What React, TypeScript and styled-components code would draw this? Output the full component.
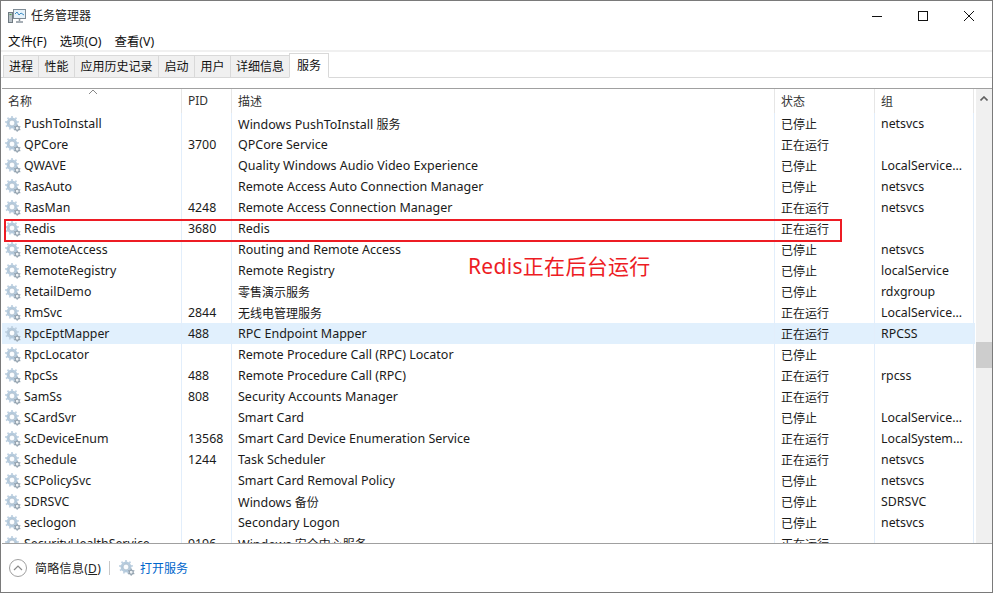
import React from "react";
import styled, { createGlobalStyle } from "styled-components";

const Global = createGlobalStyle`
  html, body { margin: 0; padding: 0; background: #fff; }
  body { font-family: "Noto Sans", "Noto Sans CJK SC", sans-serif; font-size: 12px; color: #1a1a1a; }
`;
const Win = styled.div`
  position: relative; box-sizing: border-box; width: 993px; height: 593px;
  border: 1px solid #7a7a7a; background: #fff; display: flex; flex-direction: column; overflow: hidden;
`;
const TitleBar = styled.div`display: flex; align-items: center; height: 29px; padding-left: 7px; flex: none;`;
const TitleText = styled.span`margin: -2px 0 0 5px; font-size: 12px; color: #222;`;
const WinButtons = styled.div`margin-left: auto; display: flex; align-items: center; height: 29px;`;
const WinBtn = styled.div`width: 46px; height: 29px; display: flex; align-items: center; justify-content: center;`;
const MenuBar = styled.div`display: flex; height: 20px; align-items: center; padding: 2px 0 0 7px; box-sizing: border-box; gap: 13px; flex: none;`;
const MenuItem = styled.span`font-size: 12.4px; color: #111;`;
const TabStrip = styled.div`
  display: flex; align-items: flex-end; height: 25px; flex: none; padding-left: 2px;
  border-top: 2px solid #f0f0f0; border-bottom: 1px solid #d9d9d9;
`;
const Tab = styled.div<{ $active?: boolean; $w: number }>`
  box-sizing: border-box; height: ${(p) => (p.$active ? 25 : 22)}px; width: ${(p) => p.$w}px;
  display: flex; align-items: center; justify-content: center; font-size: 12px; color: #111;
  padding-bottom: 2px;
  background: ${(p) => (p.$active ? "#fff" : "#f0f0f0")};
  border: 1px solid #d9d9d9; border-bottom: ${(p) => (p.$active ? "1px solid #fff" : "none")}; margin-right: -1px;
  margin-bottom: ${(p) => (p.$active ? -1 : 0)}px; position: relative;
`;
const Spacer = styled.div`height: 10px; flex: none;`;
const TableWrap = styled.div`
  flex: 1; min-height: 0; margin-left: 1px; border-top: 1px solid #a0a0a0; border-bottom: 1px solid #a0a0a0;
  display: flex; overflow: hidden;
`;
const Table = styled.div`flex: 1; min-width: 0; overflow: hidden;`;
const Grid = `display: grid; grid-template-columns: 180px 50px 543px 100px 99px;`;
const HeadRow = styled.div`${Grid} height: 24px; position: relative;`;
const HeadCell = styled.div`
  box-sizing: border-box; border-right: 1px solid #e6e6e6; padding-left: 6px; padding-top: 3px;
  font-size: 12px; color: #333;
`;
const SortArrow = styled.svg`position: absolute; left: 86px; top: 0; width: 10px; height: 6px;`;
const Row = styled.div<{ $sel?: boolean }>`
  ${Grid} height: 21px; background: ${(p) => (p.$sel ? "#e1f0fd" : "transparent")};
`;
const Cell = styled.div`
  box-sizing: border-box; border-right: 1px solid #e2eefb; padding-left: 6px;
  display: flex; align-items: center; white-space: pre;
  overflow: hidden; font-size: 12.35px; color: #1a1a1a;
`;
const NameCell = styled(Cell)`padding-left: 3px; gap: 3px;`;
const DescCell = styled(Cell)`font-size: 12.5px;`;
const Cjk = styled.span`font-size: 12px;`;
const ScrollBar = styled.div`width: 16px; flex: none; margin-left: 1px; background: #f0f0f0; position: relative;`;
const Thumb = styled.div`position: absolute; left: 0; right: 0; top: 253px; height: 26px; background: #cdcdcd;`;
const ScrollUp = styled.svg`position: absolute; left: 4px; top: 7px; width: 8px; height: 5px;`;
const Footer = styled.div`display: flex; align-items: center; height: 48px; flex: none; padding-left: 8px;`;
const Chevron = styled.div`
  width: 18px; height: 18px; border: 1px solid #a0a0a0; border-radius: 50%; box-sizing: border-box;
  display: flex; align-items: center; justify-content: center;
`;
const FooterLabel = styled.span`margin-left: 8px; font-size: 12px; letter-spacing: .3px; color: #222;`;
const Underlined = styled.span`text-decoration: underline;`;
const Divider = styled.div`width: 1px; height: 14px; background: #c8c8c8; margin: 0 9px 0 8px;`;
const LinkText = styled.span`margin-left: 5px; color: #0066cc; font-size: 12px;`;
const RedBox = styled.div`
  position: absolute; left: 3px; top: 218px; width: 838px; height: 23px; box-sizing: border-box;
  border: 2px solid #ed1c24; pointer-events: none;
`;
const Note = styled.div`position: absolute; left: 467px; top: 249px; font-size: 21px; letter-spacing: .3px; color: #ed1c24; white-space: nowrap;`;

const Gear = ({ size = 16 }: { size?: number }) => {
  const teeth = (cx: number, cy: number, r: number, n: number, w: number, c: string) =>
    Array.from({ length: n }, (_, i) => (
      <line key={i} x1={cx} y1={cy - r} x2={cx} y2={cy - r + 2.4} stroke={c} strokeWidth={w}
        transform={`rotate(${(360 / n) * i} ${cx} ${cy})`} />
    ));
  return (
    <svg width={size} height={size} viewBox="0 0 16 16" style={{ flex: "none" }}>
      {teeth(7, 7, 7, 9, 1.7, "#c0d2e2")}
      <circle cx="7" cy="7" r="4.2" fill="none" stroke="#b6cbdd" strokeWidth="2.4" />
      <circle cx="7" cy="7" r="2.9" fill="#fbfdff" stroke="#8fa6ba" strokeWidth=".6" />
      {teeth(12.2, 12.2, 3.6, 6, 1.2, "#98a7b4")}
      <circle cx="12.2" cy="12.2" r="2" fill="#eef2f5" stroke="#8f9eab" strokeWidth="1.1" />
    </svg>
  );
};

const Text = ({ v }: { v: string }) => (
  <span>
    {v.split(/([\u4e00-\u9fff]+)/).map((part, i) =>
      i % 2 ? <Cjk key={i}>{part}</Cjk> : part
    )}
  </span>
);

const rows: [string, string, string, string, string][] = [
  ["PushToInstall", "", "Windows PushToInstall 服务", "已停止", "netsvcs"],
  ["QPCore", "3700", "QPCore Service", "正在运行", ""],
  ["QWAVE", "", "Quality Windows Audio Video Experience", "已停止", "LocalService..."],
  ["RasAuto", "", "Remote Access Auto Connection Manager", "已停止", "netsvcs"],
  ["RasMan", "4248", "Remote Access Connection Manager", "正在运行", "netsvcs"],
  ["Redis", "3680", "Redis", "正在运行", ""],
  ["RemoteAccess", "", "Routing and Remote Access", "已停止", "netsvcs"],
  ["RemoteRegistry", "", "Remote Registry", "已停止", "localService"],
  ["RetailDemo", "", "零售演示服务", "已停止", "rdxgroup"],
  ["RmSvc", "2844", "无线电管理服务", "正在运行", "LocalService..."],
  ["RpcEptMapper", "488", "RPC Endpoint Mapper", "正在运行", "RPCSS"],
  ["RpcLocator", "", "Remote Procedure Call (RPC) Locator", "已停止", ""],
  ["RpcSs", "488", "Remote Procedure Call (RPC)", "正在运行", "rpcss"],
  ["SamSs", "808", "Security Accounts Manager", "正在运行", ""],
  ["SCardSvr", "", "Smart Card", "已停止", "LocalService..."],
  ["ScDeviceEnum", "13568", "Smart Card Device Enumeration Service", "正在运行", "LocalSystem..."],
  ["Schedule", "1244", "Task Scheduler", "正在运行", "netsvcs"],
  ["SCPolicySvc", "", "Smart Card Removal Policy", "已停止", "netsvcs"],
  ["SDRSVC", "", "Windows 备份", "已停止", "SDRSVC"],
  ["seclogon", "", "Secondary Logon", "已停止", "netsvcs"],
  ["SecurityHealthService", "9196", "Windows 安全中心服务", "正在运行", ""],
];

const tabs: [string, number][] = [["进程", 36], ["性能", 37], ["应用历史记录", 85], ["启动", 37], ["用户", 37], ["详细信息", 60]];

export default function App() {
  return (
    <Win>
      <Global />
      <TitleBar>
        <svg width="18" height="16" viewBox="0 0 18 16">
          <rect x="0.5" y="4.5" width="4" height="10" fill="#b9c2c8" stroke="#6f7a82" />
          <rect x="1.5" y="6" width="2" height="1" fill="#4fa14f" />
          <rect x="5.5" y="1.5" width="12" height="9" fill="#e6f2fa" stroke="#7f8c96" />
          <path d="M7 6 L9 4 L11 7 L13 5 L16 7" fill="none" stroke="#3f8fc8" strokeWidth="1" />
          <path d="M11.5 11 V13 M8 14 H15" stroke="#8a959e" strokeWidth="1.5" />
        </svg>
        <TitleText>任务管理器</TitleText>
        <WinButtons>
          <WinBtn>
            <svg width="10" height="10"><path d="M0 5.5 H10" stroke="#111" /></svg>
          </WinBtn>
          <WinBtn>
            <svg width="10" height="10"><rect x=".5" y=".5" width="9" height="9" fill="none" stroke="#111" /></svg>
          </WinBtn>
          <WinBtn>
            <svg width="10" height="10"><path d="M0 0 L10 10 M10 0 L0 10" stroke="#111" /></svg>
          </WinBtn>
        </WinButtons>
      </TitleBar>
      <MenuBar>
        <MenuItem>文件(F)</MenuItem>
        <MenuItem>选项(O)</MenuItem>
        <MenuItem>查看(V)</MenuItem>
      </MenuBar>
      <TabStrip>
        {tabs.map(([t, w]) => <Tab key={t} $w={w}>{t}</Tab>)}
        <Tab $active $w={40}>服务</Tab>
      </TabStrip>
      <Spacer />
      <TableWrap>
        <Table>
          <HeadRow>
            <HeadCell>名称</HeadCell>
            <HeadCell>PID</HeadCell>
            <HeadCell>描述</HeadCell>
            <HeadCell>状态</HeadCell>
            <HeadCell>组</HeadCell>
            <SortArrow viewBox="0 0 10 6"><path d="M1 5 L5 1 L9 5" fill="none" stroke="#888" /></SortArrow>
          </HeadRow>
          {rows.map((r) => (
            <Row key={r[0]} $sel={r[0] === "RpcEptMapper"}>
              <NameCell><Gear />{r[0]}</NameCell>
              <Cell>{r[1]}</Cell>
              <DescCell><Text v={r[2]} /></DescCell>
              <Cell><Text v={r[3]} /></Cell>
              <Cell>{r[4]}</Cell>
            </Row>
          ))}
        </Table>
        <ScrollBar>
          <ScrollUp viewBox="0 0 8 5"><path d="M0.5 4.5 L4 1 L7.5 4.5" fill="none" stroke="#606060" strokeWidth="1.6" /></ScrollUp>
          <Thumb />
        </ScrollBar>
      </TableWrap>
      <Footer>
        <Chevron>
          <svg width="10" height="6"><path d="M1 5 L5 1 L9 5" fill="none" stroke="#8a8a8a" strokeWidth="1.2" /></svg>
        </Chevron>
        <FooterLabel>简略信息(<Underlined>D</Underlined>)</FooterLabel>
        <Divider />
        <Gear />
        <LinkText>打开服务</LinkText>
      </Footer>
      <RedBox />
      <Note>Redis正在后台运行</Note>
    </Win>
  );
}
